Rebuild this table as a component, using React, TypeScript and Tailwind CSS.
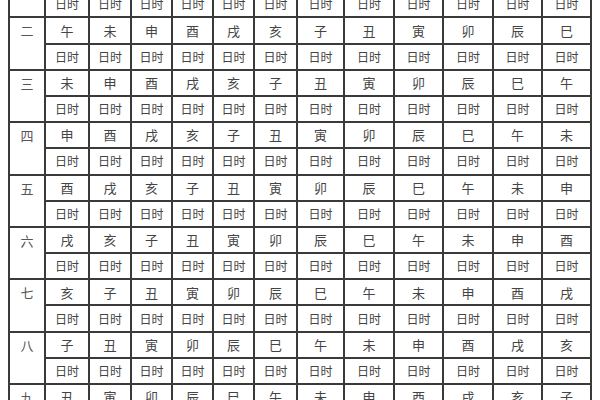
const branches = ["子", "丑", "寅", "卯", "辰", "巳", "午", "未", "申", "酉", "戌", "亥"];
const months = ["一", "二", "三", "四", "五", "六", "七", "八", "九"];

function shifted(start: number) {
  return branches.map((_, i) => branches[(start + i) % 12]);
}

export default function App() {
  return (
    <div className="h-[400px] w-[600px] overflow-hidden bg-white">
      <div
        className="ml-[8px] mt-[-36px] grid w-[584px] gap-[2px] bg-[#3a3a3a] p-[2px] text-[12px] text-[#444]"
        style={{
          fontFamily: '"Noto Sans CJK SC", "Noto Sans", sans-serif',
          gridTemplateColumns: "34px 42px 40px 39px 39px 39px 41px 45px 48px 47px 48px 47px 47px",
          gridAutoRows: "24.2px",
        }}
      >
        {months.map((m, gi) => {
          const row = shifted((gi + 5) % 12);
          return [
            <div key={m} className="row-span-2 flex justify-center bg-white pt-[3px] text-[13px] text-[#555]">
              {m}
            </div>,
            ...row.map((b, i) => (
              <div key={m + "b" + i} className="flex items-center justify-center bg-white text-[13px]">
                {b}
              </div>
            )),
            ...row.map((_, i) => (
              <div key={m + "t" + i} className="flex items-center justify-center bg-white">
                日时
              </div>
            )),
          ];
        })}
      </div>
    </div>
  );
}
